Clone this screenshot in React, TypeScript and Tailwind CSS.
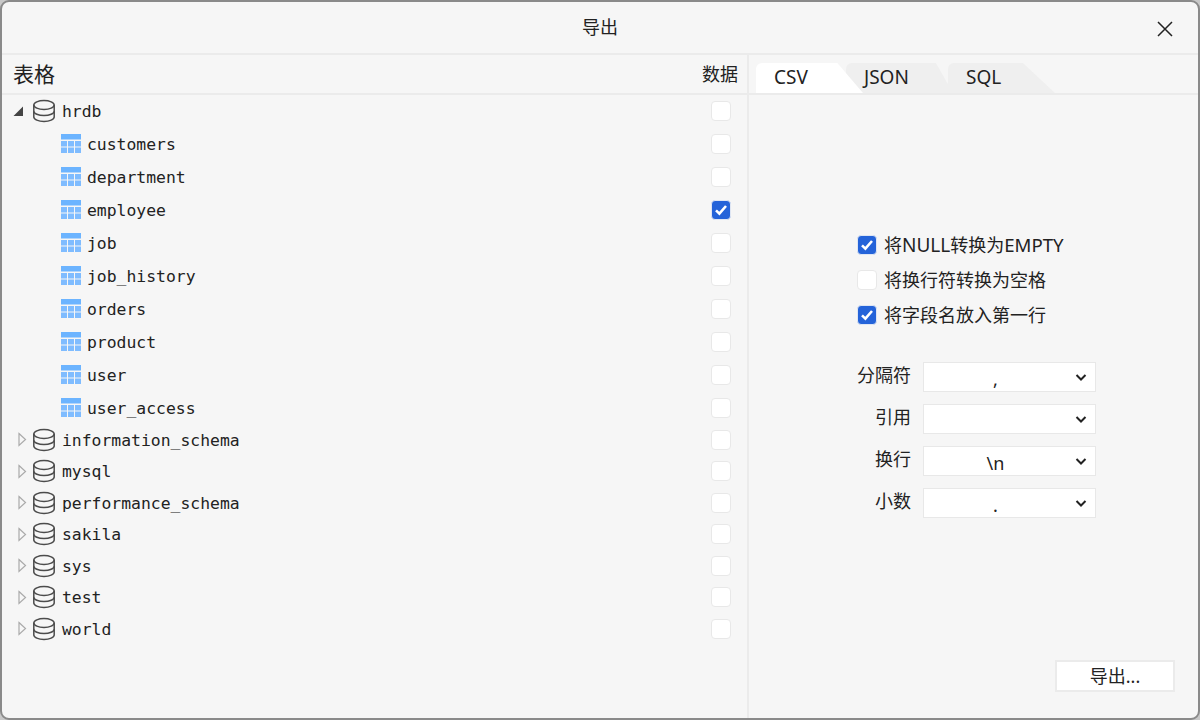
import React from "react";

const uiFont = "font-['Noto_Sans','Noto_Sans_CJK_SC',sans-serif]";

const Check = ({ checked }: { checked?: boolean }) => (
  <span
    className={
      checked
        ? "flex h-5 w-5 items-center justify-center rounded-[4px] border border-[#dfe6f3] bg-[#2463d9]"
        : "flex h-5 w-5 items-center justify-center rounded-[4px] border border-[#e8e8e8] bg-white"
    }
  >
    {checked && (
      <svg width="16" height="16" viewBox="0 0 16 16" fill="none">
        <path d="M3 8.4 6.4 11.6 13 4" stroke="#fff" strokeWidth="2.6" />
      </svg>
    )}
  </span>
);

const DbIcon = () => (
  <svg width="24" height="24" viewBox="0 0 24 24" fill="none" stroke="#4c4c4c" strokeWidth="1.5">
    <ellipse cx="12" cy="6" rx="10.2" ry="4.4" />
    <path d="M1.8 6v12c0 2.4 4.6 4.4 10.2 4.4s10.2-2 10.2-4.4V6" />
    <path d="M1.8 12.2c0 2.4 4.6 4.4 10.2 4.4s10.2-2 10.2-4.4" />
  </svg>
);

const TableIcon = () => (
  <svg width="20" height="20" viewBox="0 0 20 20">
    <rect x="0" y="0" width="20" height="5.5" fill="#6cb4ff" />
    {[7, 13.5].map((y) =>
      [0, 7, 14].map((x) => (
        <rect key={`${x}-${y}`} x={x} y={y} width="6" height="5.5" fill="#7fbcff" />
      ))
    )}
  </svg>
);

const Caret = ({ open }: { open?: boolean }) =>
  open ? (
    <svg width="12" height="12" viewBox="0 0 12 12">
      <path d="M11 1.5V11H1.5Z" fill="#444" />
    </svg>
  ) : (
    <svg width="10" height="15" viewBox="0 0 10 15" fill="none">
      <path d="M2 1.5 8.5 7.5 2 13.5Z" stroke="#aaa" strokeWidth="1.2" />
    </svg>
  );

const tables: [string, boolean][] = [
  ["customers", false],
  ["department", false],
  ["employee", true],
  ["job", false],
  ["job_history", false],
  ["orders", false],
  ["product", false],
  ["user", false],
  ["user_access", false],
];

const schemas = ["information_schema", "mysql", "performance_schema", "sakila", "sys", "test", "world"];

const Select = ({ label, value }: { label: string; value: string }) => (
  <div className="flex items-center">
    <span className="w-[54px] pb-[4px] text-right text-[18px] leading-none text-[#222]">{label}</span>
    <div className="ml-[12px] flex h-[30px] w-[173px] items-center border border-[#e8e8e8] bg-white pr-[7px]">
      <span className="flex-1 pr-[7px] pt-[4px] text-center text-[18px] leading-none text-[#222]">{value}</span>
      <svg width="14" height="14" viewBox="0 0 14 14" fill="none">
        <path d="M2.5 5 7 9.5 11.5 5" stroke="#222" strokeWidth="2" />
      </svg>
    </div>
  </div>
);

const Option = ({ checked, children }: { checked?: boolean; children: React.ReactNode }) => (
  <div className="flex h-[35px] items-center gap-[7px] text-[18px] text-[#222]">
    <Check checked={checked} />
    <span className="pt-[2px]">{children}</span>
  </div>
);

export default function App() {
  return (
    <div className={`h-[720px] w-[1200px] overflow-hidden bg-[#c8c8c8] ${uiFont}`}>
      <div className="flex h-full flex-col rounded-[9px] border-2 border-[#8a8a8a] bg-[#f6f6f6]">
        <div className="relative flex h-[53px] shrink-0 items-center justify-center border-b-2 border-[#ebebeb] text-[18px] text-[#222]">
          导出
          <svg className="absolute right-[24px] top-[18px]" width="18" height="18" viewBox="0 0 18 18" fill="none">
            <path d="M2 2 16 16M16 2 2 16" stroke="#222" strokeWidth="1.5" />
          </svg>
        </div>
        <div className="flex min-h-0 flex-1">
          <div className="w-[747px] shrink-0 border-r-2 border-[#ebebeb]">
            <div className="flex h-[40px] items-center justify-between border-b-2 border-[#ebebeb] pl-[11px] pr-[9px] pt-[1px]">
              <span className="text-[21px] text-[#222]">表格</span>
              <span className="text-[18px] text-[#222]">数据</span>
            </div>
            <div className="-mt-[1px] font-['DejaVu_Sans_Mono',monospace] text-[16.4px] text-[#222]">
              <div className="flex h-[33px] items-center pr-[16px]">
                <span className="flex w-[30px] justify-end pr-[8px]"><Caret open /></span>
                <DbIcon />
                <span className="ml-[6px] flex-1 pt-[3px]">hrdb</span>
                <Check />
              </div>
              {tables.map(([name, checked]) => (
                <div key={name} className="flex h-[33px] items-center pl-[59px] pr-[16px]">
                  <TableIcon />
                  <span className="ml-[6px] flex-1 pt-[3px]">{name}</span>
                  <Check checked={checked} />
                </div>
              ))}
              {schemas.map((name) => (
                <div key={name} className="flex h-[31.5px] items-center pr-[16px]">
                  <span className="flex w-[30px] justify-end pr-[5px]"><Caret /></span>
                  <DbIcon />
                  <span className="ml-[6px] flex-1 pt-[3px]">{name}</span>
                  <Check />
                </div>
              ))}
            </div>
          </div>
          <div className="flex min-w-0 flex-1 flex-col">
            <div className="flex h-[40px] items-end border-b-2 border-[#ebebeb] pl-[7px]">
              <div className="relative z-10 flex h-[30px] w-[107px] items-center rounded-tl-[6px] bg-white pb-[1px] pl-[18px] text-[19px] text-[#222] [clip-path:polygon(0_0,76%_0,100%_100%,0_100%)]">
                CSV
              </div>
              <div className="-ml-[17px] flex h-[30px] w-[107px] items-center rounded-tl-[6px] bg-[#efefef] pb-[1px] pl-[18px] text-[19px] text-[#222] [clip-path:polygon(0_0,84%_0,100%_100%,0_100%)]">
                JSON
              </div>
              <div className="-ml-[5px] flex h-[30px] w-[107px] items-center rounded-tl-[6px] bg-[#efefef] pb-[1px] pl-[18px] text-[19px] text-[#222] [clip-path:polygon(0_0,70%_0,100%_100%,0_100%)]">
                SQL
              </div>
            </div>
            <div className="flex flex-1 flex-col pl-[108px] pt-[132px]">
              <div>
                <Option checked>
                  将<span className="text-[19px]">NULL</span>转换为<span className="text-[18.6px]">EMPTY</span>
                </Option>
                <Option>将换行符转换为空格</Option>
                <Option checked>将字段名放入第一行</Option>
              </div>
              <div className="mt-[30px] flex flex-col gap-[12px]">
                <Select label="分隔符" value="," />
                <Select label="引用" value="" />
                <Select label="换行" value="\n" />
                <Select label="小数" value="." />
              </div>
              <div className="mt-auto mb-[26px] mr-[23px] flex justify-end">
                <div className="flex h-[32px] w-[120px] items-center justify-center border-2 border-[#ebebeb] bg-white text-[18px] text-[#222]">
                  导出...
                </div>
              </div>
            </div>
          </div>
        </div>
      </div>
    </div>
  );
}
